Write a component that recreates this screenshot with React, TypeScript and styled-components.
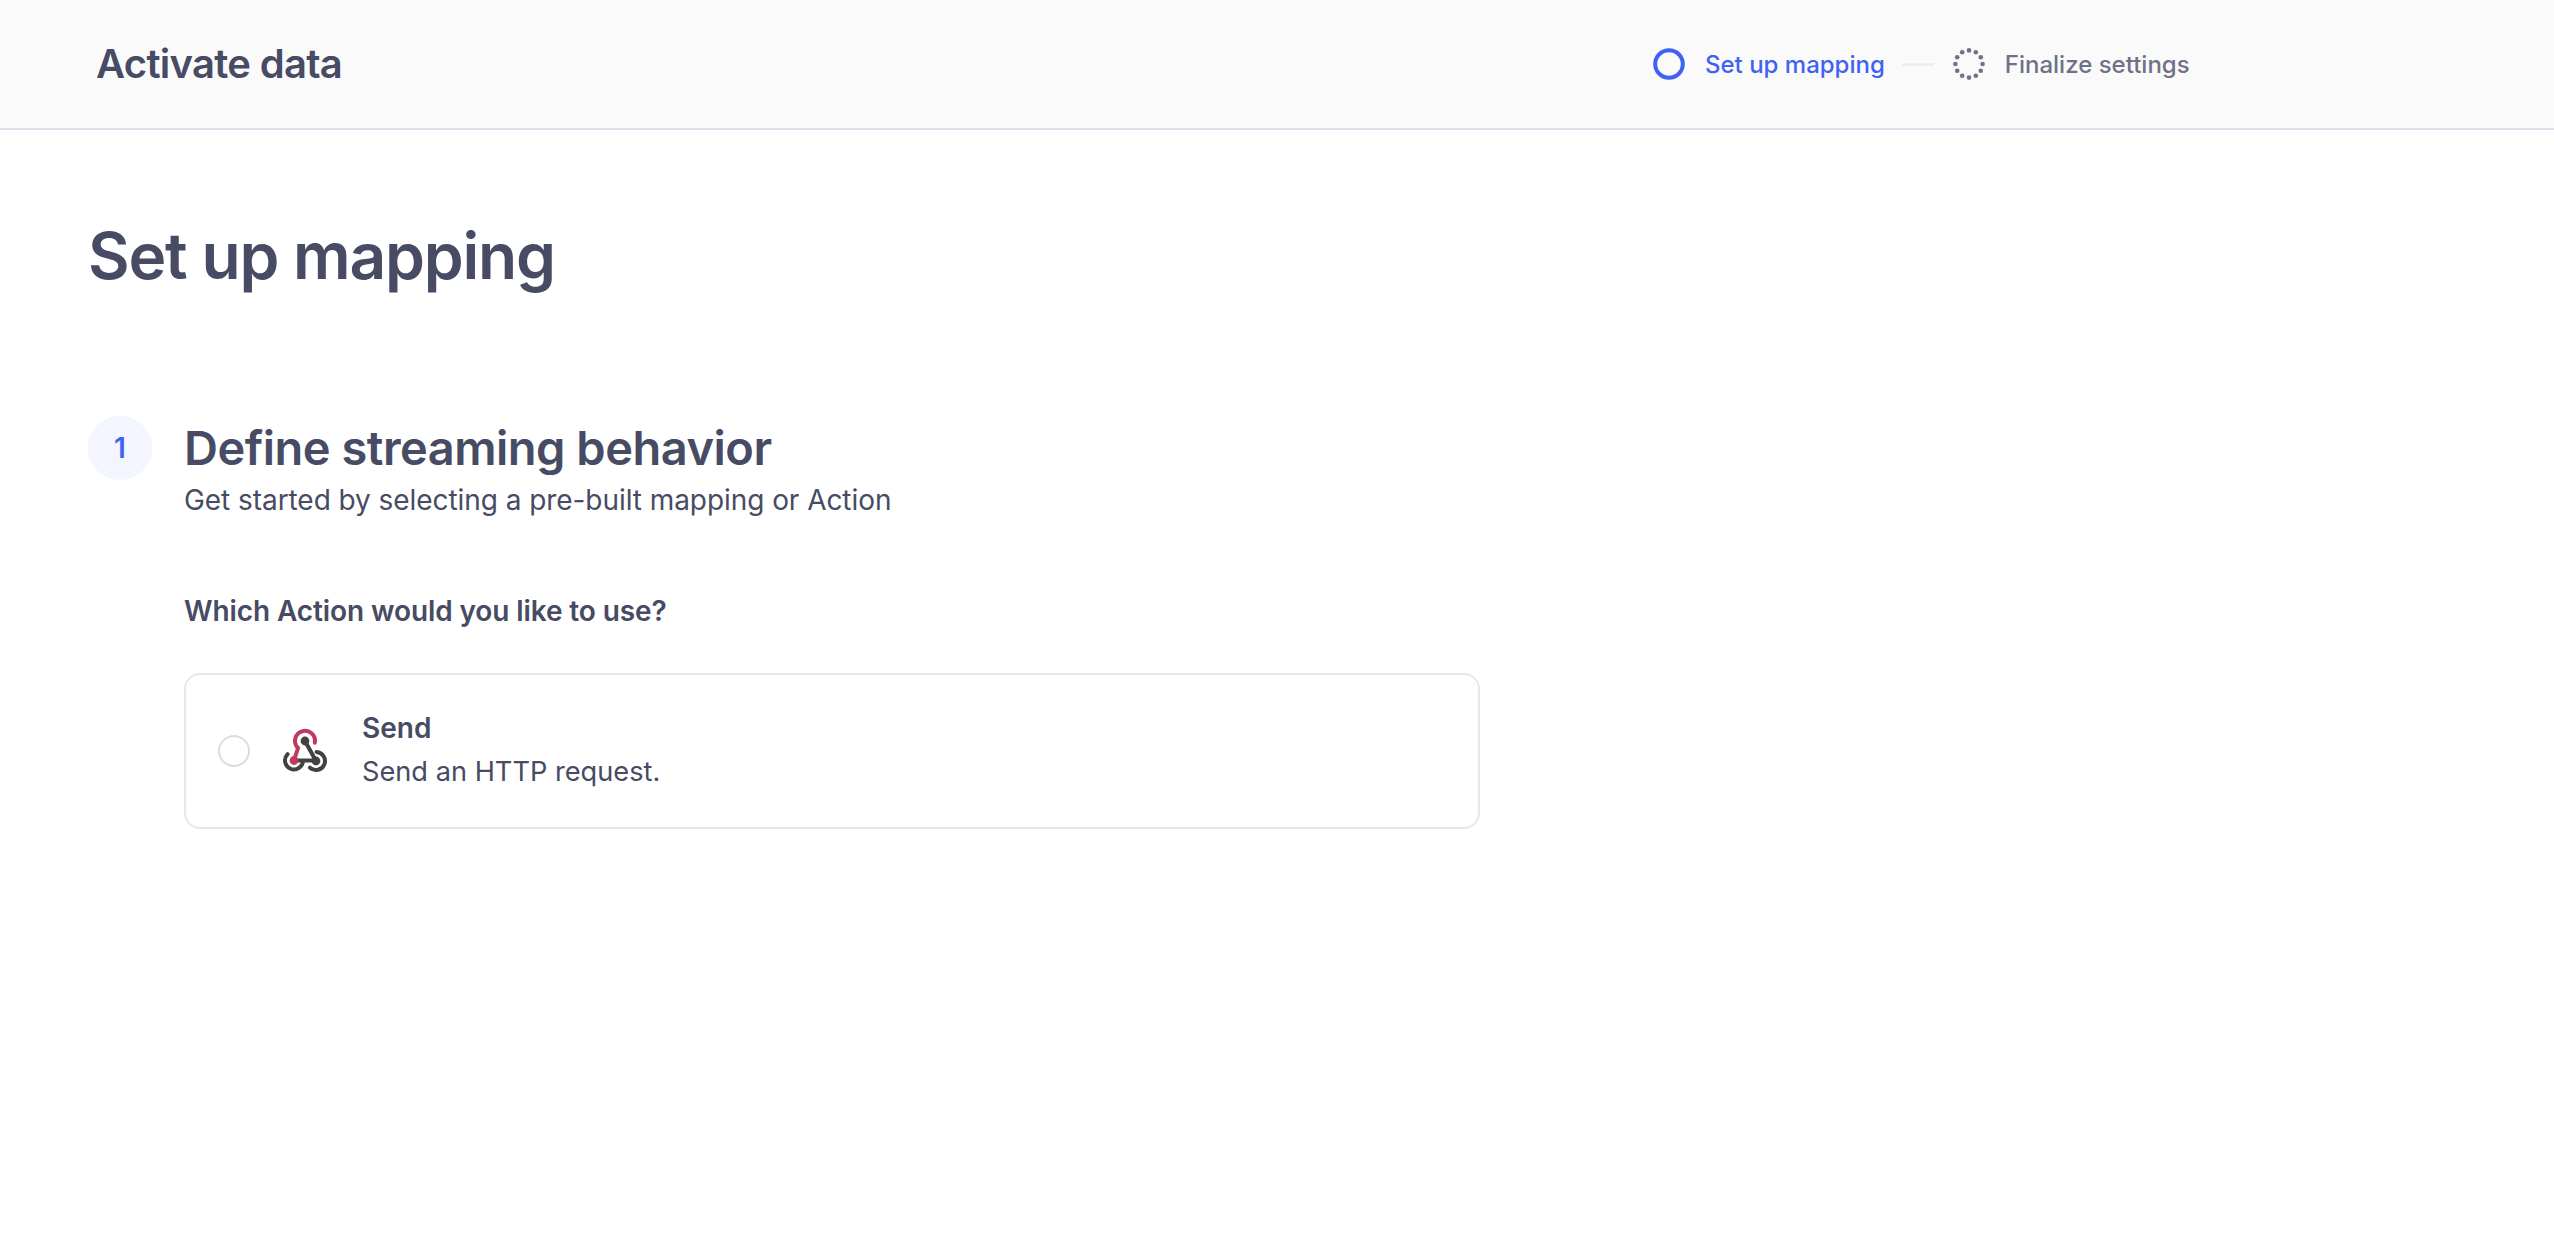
import { FC } from 'react';
import styled, { createGlobalStyle } from 'styled-components';

const GlobalStyle = createGlobalStyle`
    html, body {
        margin: 0;
        padding: 0;
        background: #ffffff;
        font-family: Inter, "Liberation Sans", sans-serif;
        color: #474b63;
    }
`

const Page = styled.div`
    min-height: 1246px;
    display: flex;
    flex-direction: column;
`

const TopBar = styled.header`
    height: 128px;
    box-sizing: content-box;
    display: flex;
    align-items: center;
    padding-left: 96px;
    background: #fafafb;
    border-bottom: 2px solid #e0dfec;
`

const TopTitle = styled.div`
    flex: 0 0 1557px;
    padding-bottom: 2px;
    font-size: 40px;
    font-weight: 600;
    letter-spacing: -0.7px;
`

const Stepper = styled.div`
    display: flex;
    align-items: center;
`

const StepLabel = styled.span<{ $active?: boolean }>`
    margin-left: 20px;
    font-size: 24px;
    font-weight: 500;
    color: ${p => (p.$active ? '#3f62f3' : '#6f7187')};
`

const StepLine = styled.span`
    width: 32px;
    height: 3px;
    margin: 0 19px 0 17px;
    background: #eeeef3;
`

const Content = styled.main`
    padding: 0 88px;
`

const PageTitle = styled.h1`
    margin: 0;
    padding-top: 80px;
    font-size: 64px;
    line-height: 92px;
    font-weight: 600;
    letter-spacing: -1.2px;
`

const SectionHead = styled.section`
    display: flex;
    gap: 32px;
    margin-top: 114px;
`

const StepNumber = styled.div`
    width: 64px;
    height: 64px;
    flex: none;
    border-radius: 50%;
    background: #f3f5ff;
    color: #3f62f3;
    display: flex;
    align-items: center;
    justify-content: center;
    font-size: 28px;
    font-weight: 600;
`

const SectionTitle = styled.h2`
    margin: 0;
    font-size: 47px;
    line-height: 64px;
    font-weight: 600;
    letter-spacing: -0.5px;
`

const SectionSub = styled.p`
    margin: 0;
    padding-top: 2px;
    font-size: 28px;
    line-height: 36px;
    letter-spacing: -0.06px;
`

const Body = styled.div`
    padding-left: 96px;
`

const Question = styled.div`
    margin-top: 73px;
    font-size: 28px;
    line-height: 40px;
    font-weight: 600;
    letter-spacing: -0.1px;
`

const OptionCard = styled.div`
    box-sizing: border-box;
    width: 1296px;
    height: 156px;
    margin-top: 42px;
    display: flex;
    align-items: center;
    padding-left: 32px;
    border: 2px solid #e8e7f0;
    border-radius: 16px;
    background: #fff;
`

const Radio = styled.span`
    box-sizing: border-box;
    width: 32px;
    height: 32px;
    flex: none;
    border: 2px solid #dcdbe6;
    border-radius: 50%;
`

const OptionIcon = styled.svg`
    flex: none;
    width: 48px;
    height: 48px;
    margin-left: 31px;
`

const OptionText = styled.div`
    margin-left: 33px;
    padding-bottom: 2px;
`

const OptionName = styled.div`
    font-size: 28px;
    line-height: 40px;
    font-weight: 600;
`

const OptionDesc = styled.div`
    margin-top: 4px;
    font-size: 27.2px;
    line-height: 40px;
`

const WebhookIcon: FC = () => (
    <OptionIcon viewBox="0 0 48 48" fill="none">
        <path
            d="M6.6 27.1A9 9 0 1 0 22 33.5H13M35.5 25A9 9 0 1 1 29 40.7M13 33.5H35M24 14L35 34"
            stroke="#424245"
            strokeWidth="4"
            strokeLinecap="round"
        />
        <circle cx="24" cy="14" r="4.4" fill="#424245" />
        <circle cx="35" cy="34" r="4.4" fill="#424245" />
        <path
            d="M13 33.5L17 21A10 10 0 1 1 33.8 15.7"
            stroke="#c0395f"
            strokeWidth="4"
            strokeLinecap="round"
        />
        <circle cx="13" cy="33.5" r="4.4" fill="#c0395f" />
    </OptionIcon>
)

const ActiveRing: FC = () => (
    <svg width="32" height="32" viewBox="0 0 32 32" fill="none">
        <circle cx="16" cy="16" r="13.8" stroke="#3f62f3" strokeWidth="4" />
    </svg>
)

const DottedRing: FC = () => {
    const dots = Array.from({ length: 12 }, (_, i) => (i * Math.PI * 2) / 12)
    return (
        <svg width="32" height="32" viewBox="0 0 32 32" fill="#6f7187">
            {dots.map(a => (
                <circle key={a} cx={16 + 13.6 * Math.cos(a)} cy={16 + 13.6 * Math.sin(a)} r="2.3" />
            ))}
        </svg>
    )
}

const App: FC = () => {
    return (
        <Page>
            <GlobalStyle />
            <TopBar>
                <TopTitle>Activate data</TopTitle>
                <Stepper>
                    <ActiveRing />
                    <StepLabel $active>Set up mapping</StepLabel>
                    <StepLine />
                    <DottedRing />
                    <StepLabel>Finalize settings</StepLabel>
                </Stepper>
            </TopBar>

            <Content>
                <PageTitle>Set up mapping</PageTitle>

                <SectionHead>
                    <StepNumber>1</StepNumber>
                    <div>
                        <SectionTitle>Define streaming behavior</SectionTitle>
                        <SectionSub>Get started by selecting a pre-built mapping or Action</SectionSub>
                    </div>
                </SectionHead>

                <Body>
                    <Question>Which Action would you like to use?</Question>
                    <OptionCard>
                        <Radio />
                        <WebhookIcon />
                        <OptionText>
                            <OptionName>Send</OptionName>
                            <OptionDesc>Send an HTTP request.</OptionDesc>
                        </OptionText>
                    </OptionCard>
                </Body>
            </Content>
        </Page>
    )
}

export default App
